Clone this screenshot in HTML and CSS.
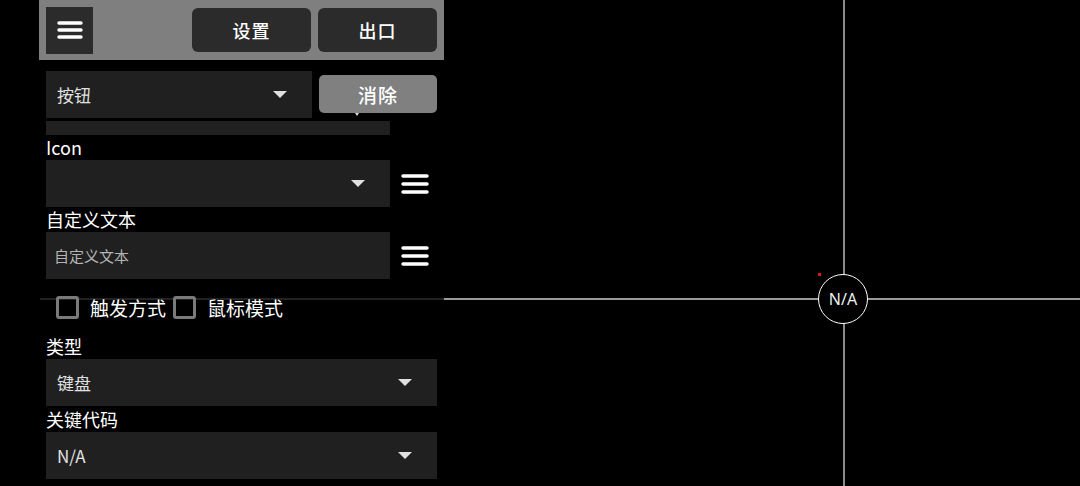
FILE: index.html
```html
<!DOCTYPE html>
<html lang="zh">
<head>
    <meta charset="UTF-8">
    <meta name="viewport" content="width=device-width, initial-scale=1.0">
    <title>按钮编辑</title>
    <link rel="stylesheet" href="styles.css">
</head>
<body>
    <div id="canvas">
        <div class="axis-h"></div>
        <div class="axis-v"></div>
        <div class="node">N/A</div>
        <div class="dot"></div>
    </div>

    <div id="panel">
        <div class="toolbar">
            <button class="menu-btn">
                <svg width="26" height="18" viewBox="0 0 26 18"><g stroke="#fff" stroke-width="3.4" stroke-linecap="round"><line x1="2" y1="2" x2="24" y2="2"/><line x1="2" y1="9" x2="24" y2="9"/><line x1="2" y1="16" x2="24" y2="16"/></g></svg>
            </button>
            <div class="spacer"></div>
            <button class="tool-btn">设置</button>
            <button class="tool-btn">出口</button>
        </div>

        <div class="row top-row">
            <div class="select select-short">
                <span>按钮</span>
                <span class="caret"></span>
            </div>
            <div class="remove-wrap">
                <button class="remove-btn">消除</button>
                <span class="tick"></span>
            </div>
        </div>
        <div class="strip"></div>

        <div class="label">Icon</div>
        <div class="row">
            <div class="select select-mid">
                <span></span>
                <span class="caret"></span>
            </div>
            <svg class="lines" width="28" height="20" viewBox="0 0 28 20"><g stroke="#fff" stroke-width="3.4" stroke-linecap="round"><line x1="2" y1="2" x2="26" y2="2"/><line x1="2" y1="10" x2="26" y2="10"/><line x1="2" y1="18" x2="26" y2="18"/></g></svg>
        </div>

        <div class="label">自定义文本</div>
        <div class="row">
            <div class="select select-mid input">
                <span class="placeholder">自定义文本</span>
            </div>
            <svg class="lines" width="28" height="20" viewBox="0 0 28 20"><g stroke="#fff" stroke-width="3.4" stroke-linecap="round"><line x1="2" y1="2" x2="26" y2="2"/><line x1="2" y1="10" x2="26" y2="10"/><line x1="2" y1="18" x2="26" y2="18"/></g></svg>
        </div>

        <div class="checks">
            <label class="check"><span class="box"></span>触发方式</label>
            <label class="check"><span class="box"></span>鼠标模式</label>
        </div>

        <div class="label type-label">类型</div>
        <div class="select select-full">
            <span>键盘</span>
            <span class="caret"></span>
        </div>

        <div class="label key-label">关键代码</div>
        <div class="select select-full">
            <span>N/A</span>
            <span class="caret"></span>
        </div>
    </div>
</body>
</html>
```

FILE: styles.css
```css
body {
    margin: 0;
    width: 1080px;
    height: 486px;
    overflow: hidden;
    background: #000;
    font-family: "Noto Sans CJK SC", "Noto Sans", sans-serif;
    color: #fff;
    position: relative;
}

/* free canvas */
#canvas { position: absolute; inset: 0; }
.axis-h {
    position: absolute; left: 40px; right: 0; top: 298px;
    height: 2px; background: #9a9a9a;
}
.axis-v {
    position: absolute; top: 0; bottom: 0; left: 843px;
    width: 2px; background: #8a8a8a;
}
.node {
    position: absolute; left: 818px; top: 274px;
    width: 48px; height: 48px;
    border: 1.6px solid #fff; border-radius: 50%;
    background: #000;
    display: flex; align-items: center; justify-content: center;
    font-family: "Noto Sans", sans-serif;
    font-size: 16px; color: #eee;
}
.dot {
    position: absolute; left: 818px; top: 273px;
    width: 3px; height: 3px; background: #e01818;
}

/* overlay panel */
#panel {
    position: absolute; left: 39px; top: 0;
    width: 405px; height: 486px;
    background: rgba(0,0,0,0.78);
}
.toolbar {
    display: flex; align-items: center; gap: 7px;
    height: 60px; padding: 0 7px;
    background: #7f7f7f;
}
.menu-btn {
    width: 47px; height: 47px; border: none; padding: 0;
    background: #2b2b2b;
    display: flex; align-items: center; justify-content: center;
}
.spacer { flex: 1; }
.tool-btn {
    width: 119px; height: 44px; border: none; border-radius: 6px;
    background: #2b2b2b; color: #fff;
    font-family: inherit; font-size: 18px; font-weight: 500;
    letter-spacing: 1px;
}

.row { display: flex; align-items: center; padding-left: 7px; }
.top-row { margin-top: 11px; align-items: flex-start; gap: 7px; }
.select {
    height: 47px; box-sizing: border-box;
    background: #202020;
    display: flex; align-items: center; justify-content: space-between;
    padding: 0 25px 0 11px;
    font-size: 17px; color: #e2e2e2;
}
.select-short { width: 266px; }
.select-mid { width: 344px; }
.select-full { width: 391px; margin-left: 7px; }
.caret {
    width: 0; height: 0;
    border-left: 7px solid transparent;
    border-right: 7px solid transparent;
    border-top: 7px solid #e0e0e0;
}
.input { padding-left: 8px; }
.placeholder { font-size: 15px; color: #b4b4b4; }

.remove-wrap { position: relative; padding-top: 4px; }
.remove-btn {
    width: 118px; height: 38px; border: none; border-radius: 5px;
    background: #808080; color: #fff;
    font-family: inherit; font-size: 19px; font-weight: 500;
    letter-spacing: 1px;
}
.tick {
    position: absolute; left: 36px; top: 42px;
    border-left: 2px solid transparent; border-right: 2px solid transparent;
    border-top: 3px solid #ddd;
}
.strip {
    width: 344px; height: 14px; margin: 3px 0 0 7px;
    background: #202020;
}

.label {
    padding-left: 7px;
    font-size: 18px; line-height: 25px; color: #fff;
}
.lines { margin-left: 11px; }

.checks {
    display: flex; gap: 7px;
    padding: 15px 0 0 17px;
    font-size: 19px;
}
.check { display: flex; align-items: center; gap: 11px; }
.box {
    width: 17px; height: 17px;
    border: 3px solid #7a7a7a; border-radius: 3px;
}
.type-label { margin-top: 13px; }
.key-label { margin-top: 1px; }
```
